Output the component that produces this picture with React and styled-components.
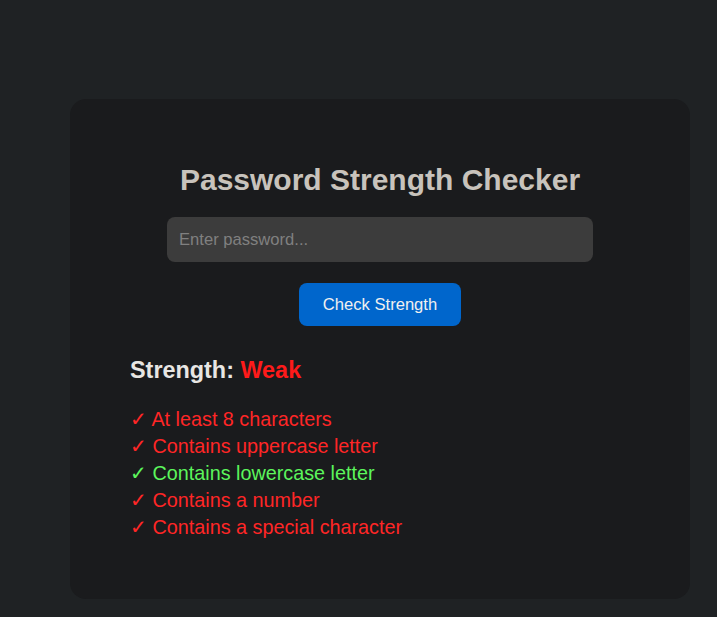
import React from 'react';
import styled, { createGlobalStyle } from 'styled-components';

const GlobalStyle = createGlobalStyle`
  body {
    margin: 0;
    background: #1f2224;
    font-family: "Liberation Sans", Arial, sans-serif;
  }
`;

const Page = styled.div`
  min-height: 617px;
  box-sizing: border-box;
  padding: 99px 27px 18px 70px;
`;

const Card = styled.div`
  width: 620px;
  height: 500px;
  box-sizing: border-box;
  background: #1a1b1d;
  border-radius: 16px;
  padding: 64px 60px 40px;
  display: flex;
  flex-direction: column;
  align-items: center;
`;

const Title = styled.h2`
  margin: 0;
  font-size: 30px;
  line-height: 34px;
  font-weight: 700;
  color: #c8c3bc;
`;

const Input = styled.input`
  margin-top: 20px;
  width: 426px;
  height: 45px;
  box-sizing: border-box;
  padding: 0 12px;
  background: #3c3c3c;
  border: none;
  border-radius: 8px;
  font-family: inherit;
  font-size: 16.6px;
  color: #e8e6e3;
  outline: none;

  &::placeholder {
    color: #808080;
  }
`;

const Button = styled.button`
  margin-top: 21px;
  height: 43px;
  padding: 0 24px;
  background: #0066cc;
  color: #f0f0f0;
  border: none;
  border-radius: 8px;
  font-family: inherit;
  font-size: 16.6px;
  cursor: pointer;
`;

const Result = styled.div`
  align-self: stretch;
  margin-top: 31px;
`;

const StrengthLine = styled.div`
  font-size: 23.4px;
  line-height: 27px;
  font-weight: 700;
  color: #e8e6e3;
`;

const Level = styled.span`
  color: #ff1a1a;
`;

const Checks = styled.ul`
  list-style: none;
  margin: 22px 0 0;
  padding: 0;
`;

const Check = styled.li`
  font-size: 19.8px;
  line-height: 27px;
  color: ${({ $ok }) => ($ok ? '#5cf55c' : '#ff2626')};
`;

const rules = [
  { label: 'At least 8 characters', ok: false },
  { label: 'Contains uppercase letter', ok: false },
  { label: 'Contains lowercase letter', ok: true },
  { label: 'Contains a number', ok: false },
  { label: 'Contains a special character', ok: false },
];

const App = () => {
  return (
    <Page>
      <GlobalStyle />
      <Card>
        <Title>Password Strength Checker</Title>
        <Input type="password" placeholder="Enter password..." />
        <Button>Check Strength</Button>
        <Result>
          <StrengthLine>
            Strength: <Level>Weak</Level>
          </StrengthLine>
          <Checks>
            {rules.map((r) => (
              <Check key={r.label} $ok={r.ok}>
                ✓ {r.label}
              </Check>
            ))}
          </Checks>
        </Result>
      </Card>
    </Page>
  );
};

export default App;
